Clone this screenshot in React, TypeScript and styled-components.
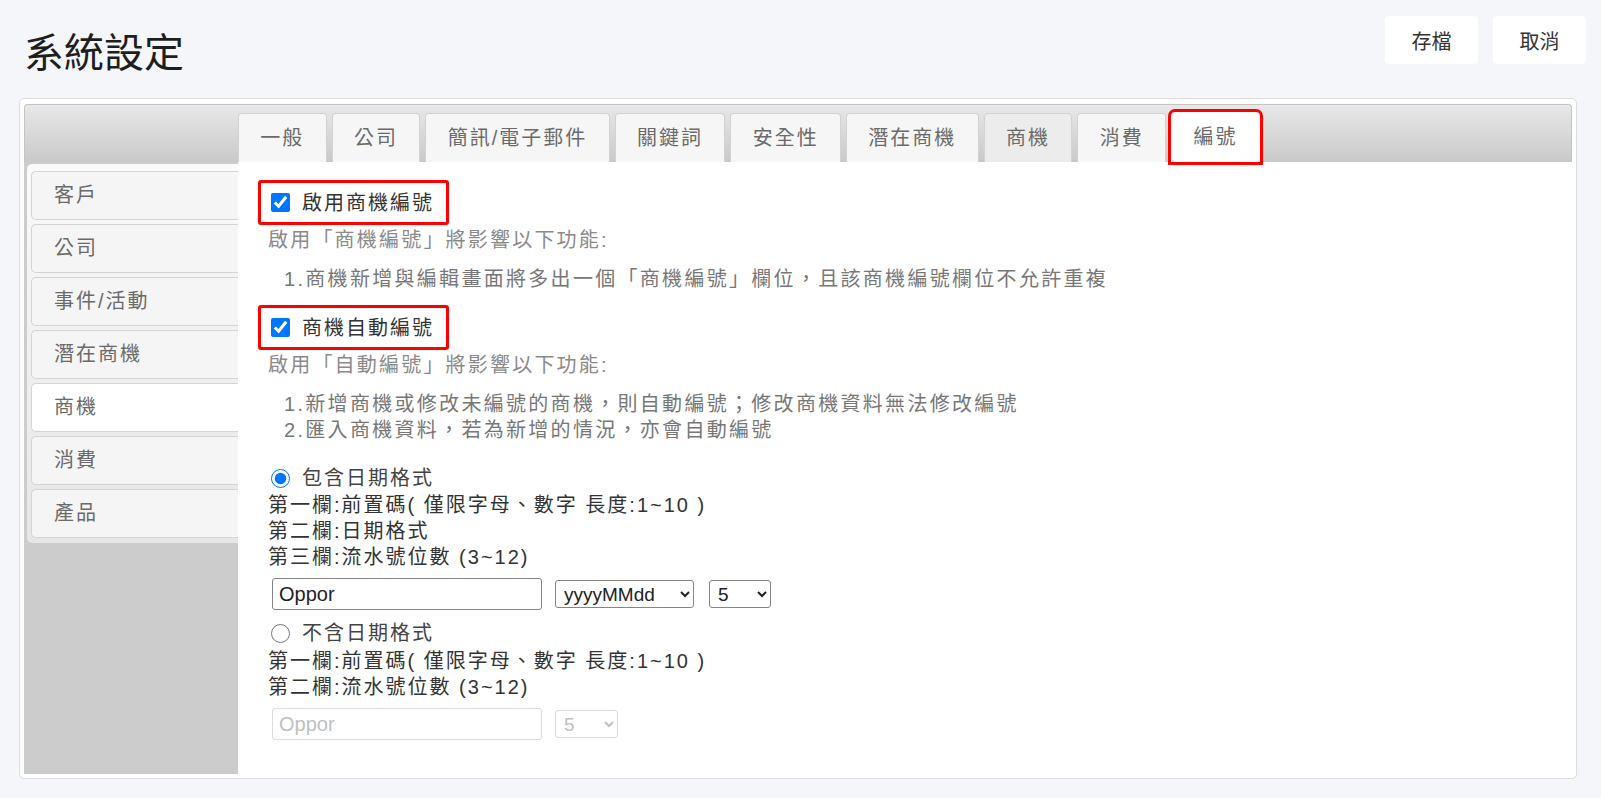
import React from 'react';
import styled, { createGlobalStyle } from 'styled-components';

const FONT = `"Liberation Sans", "Noto Sans CJK TC", sans-serif`;

const GlobalStyle = createGlobalStyle`
  html, body {
    margin: 0;
    padding: 0;
    background: #f5f6fa;
    font-family: ${FONT};
  }
`;

const TABS = ['一般', '公司', '簡訊/電子郵件', '關鍵詞', '安全性', '潛在商機', '商機', '消費', '編號'];
const NAV = ['客戶', '公司', '事件/活動', '潛在商機', '商機', '消費', '產品'];

const App: React.FC = () => {
  return (
    <Page>
      <GlobalStyle />
      <Header>
        <Title>系統設定</Title>
        <SpacingDiv />
        <HeaderButton>存檔</HeaderButton>
        <HeaderButton>取消</HeaderButton>
      </Header>

      <Panel>
        <TabBar>
          {TABS.map((t) => (
            <Tab key={t} $active={t === '編號'} $dim={t === '商機'}>
              {t}
            </Tab>
          ))}
        </TabBar>

        <Body>
          <SideColumn>
            <NavList>
              {NAV.map((n) => (
                <NavItem key={n} $active={n === '商機'}>
                  {n}
                </NavItem>
              ))}
            </NavList>
          </SideColumn>

          <Content>
            <MarkedLabel>
              <CheckBox type="checkbox" defaultChecked />
              啟用商機編號
            </MarkedLabel>
            <Hint>啟用「商機編號」將影響以下功能:</Hint>
            <NoteList>
              <Note>1.商機新增與編輯畫面將多出一個「商機編號」欄位，且該商機編號欄位不允許重複</Note>
            </NoteList>

            <MarkedLabel $gap>
              <CheckBox type="checkbox" defaultChecked />
              商機自動編號
            </MarkedLabel>
            <Hint>啟用「自動編號」將影響以下功能:</Hint>
            <NoteList>
              <Note>1.新增商機或修改未編號的商機，則自動編號；修改商機資料無法修改編號</Note>
              <Note>2.匯入商機資料，若為新增的情況，亦會自動編號</Note>
            </NoteList>

            <RadioRow $first>
              <Radio type="radio" name="fmt" defaultChecked />
              包含日期格式
            </RadioRow>
            <FormatLine>第一欄:前置碼( 僅限字母、數字 長度:1~10 )</FormatLine>
            <FormatLine>第二欄:日期格式</FormatLine>
            <FormatLine>第三欄:流水號位數 (3~12)</FormatLine>
            <FieldRow>
              <TextInput defaultValue="Oppor" />
              <Select defaultValue="yyyyMMdd" $width={139}>
                <option>yyyyMMdd</option>
                <option>yyyyMM</option>
                <option>yyyy</option>
              </Select>
              <Select defaultValue="5" $width={62} $gap>
                <option>3</option>
                <option>4</option>
                <option>5</option>
                <option>6</option>
              </Select>
            </FieldRow>

            <RadioRow>
              <Radio type="radio" name="fmt" />
              不含日期格式
            </RadioRow>
            <FormatLine>第一欄:前置碼( 僅限字母、數字 長度:1~10 )</FormatLine>
            <FormatLine>第二欄:流水號位數 (3~12)</FormatLine>
            <FieldRow>
              <TextInput defaultValue="Oppor" disabled />
              <Select defaultValue="5" $width={63} disabled>
                <option>5</option>
              </Select>
            </FieldRow>
          </Content>
        </Body>
      </Panel>
    </Page>
  );
};
export default App;

const Page = styled.div`
  padding: 16px 24px 20px 19px;
  color: #333;
`;

const Header = styled.div`
  display: flex;
  align-items: flex-start;
  margin-right: -9px;
`;

const Title = styled.h1`
  margin: 15px 0 0 5px;
  font-size: 40px;
  line-height: 44px;
  font-weight: 400;
  color: #1e1e1e;
`;

const SpacingDiv = styled.div`
  flex: 1;
`;

const HeaderButton = styled.button`
  height: 48px;
  width: 93px;
  margin-left: 15px;
  border: none;
  border-radius: 4px;
  background: #fff;
  font-family: ${FONT};
  font-size: 20px;
  color: #333;
`;

const Panel = styled.div`
  margin-top: 23px;
  border: 1px solid #dcdde0;
  border-radius: 5px;
  background: #fff;
  padding: 5px 4px 4px 4px;
`;

const TabBar = styled.div`
  display: flex;
  align-items: flex-end;
  gap: 5px;
  height: 57px;
  padding-left: 213px;
  border: 1px solid #c4c4c4;
  border-bottom: none;
  border-radius: 4px 4px 0 0;
  background: linear-gradient(#e8e8e8, #c9c9c9);
`;

const Tab = styled.div<{ $active?: boolean; $dim?: boolean }>`
  height: 48px;
  line-height: 48px;
  padding: 0 21.35px;
  border: 1px solid #d2d2d2;
  border-bottom: none;
  border-radius: 4px 4px 0 0;
  background: ${(p) => (p.$active ? '#fff' : p.$dim ? '#ececec' : '#f6f6f6')};
  font-size: 20px;
  letter-spacing: 2px;
  color: #6a6a6a;
  white-space: nowrap;
  ${(p) =>
    p.$active &&
    `
    outline: 3px solid #f00;
    outline-offset: 0;
    height: 49px;
    border-color: #fff;
  `}
`;

const Body = styled.div`
  display: flex;
`;

const SideColumn = styled.div`
  width: 214px;
  flex-shrink: 0;
  background: #cccccc;
`;

const NavList = styled.div`
  margin: 2px 0 0 3px;
  padding: 7px 0 1px 4px;
  border-radius: 5px 0 0 5px;
  background: linear-gradient(#fafafa, #e6e6e6);
`;

const NavItem = styled.div<{ $active?: boolean }>`
  height: 47px;
  line-height: 47px;
  margin-bottom: 4px;
  padding-left: 22px;
  border: 1px solid #d4d4d4;
  border-right: none;
  border-radius: 5px 0 0 5px;
  background: ${(p) => (p.$active ? '#fff' : '#f5f5f5')};
  font-size: 20px;
  letter-spacing: 2px;
  color: #6a6a6a;
`;

const Content = styled.div`
  flex: 1;
  padding: 18px 20px 34px 30px;
  font-size: 20px;
  letter-spacing: 2px;
  line-height: 26px;
`;

const MarkedLabel = styled.label<{ $gap?: boolean }>`
  display: inline-flex;
  align-items: center;
  gap: 12px;
  height: 39px;
  margin: ${(p) => (p.$gap ? '13px' : '0')} 0 0 -10px;
  padding: 0 12px 0 10px;
  border: 3px solid #f00;
  border-radius: 3px;
  color: #333;
`;

const CheckBox = styled.input`
  width: 19px;
  height: 19px;
  margin: 0;
  accent-color: #0075ff;
`;

const Hint = styled.div`
  margin-top: 2px;
  letter-spacing: 2.2px;
  color: #8a8a8a;
`;

const NoteList = styled.div`
  margin-top: 13px;
  padding-left: 16px;
  letter-spacing: 2.3px;
  color: #777;
`;

const Note = styled.div``;

const RadioRow = styled.label<{ $first?: boolean }>`
  display: flex;
  align-items: center;
  gap: 12px;
  height: ${(p) => (p.$first ? '28px' : '30px')};
  margin-top: ${(p) => (p.$first ? '21px' : '8px')};
  color: #444;
`;

const Radio = styled.input`
  width: 19px;
  height: 19px;
  margin: 0 0 0 3px;
  accent-color: #0075ff;
`;

const FormatLine = styled.div`
  color: #333;
`;

const FieldRow = styled.div`
  display: flex;
  align-items: center;
  gap: 13px;
  margin-top: 8px;
`;

const TextInput = styled.input`
  box-sizing: border-box;
  width: 270px;
  height: 32px;
  margin-left: 4px;
  padding: 0 6px;
  border: 1px solid #858585;
  border-radius: 3px;
  font-family: ${FONT};
  font-size: 20px;
  color: #222;
  &:disabled {
    border-color: #dcdcdc;
    color: #c0c0c0;
    background: #fff;
  }
`;

const Select = styled.select<{ $width: number; $gap?: boolean }>`
  box-sizing: border-box;
  width: ${(p) => p.$width}px;
  height: 28px;
  margin-left: ${(p) => (p.$gap ? '2px' : '0')};
  padding: 0 4px;
  border: 1px solid #858585;
  border-radius: 3px;
  background: #fff;
  font-family: ${FONT};
  font-size: 19px;
  color: #222;
  &:disabled {
    border-color: #dcdcdc;
    color: #c0c0c0;
    opacity: 1;
  }
`;
